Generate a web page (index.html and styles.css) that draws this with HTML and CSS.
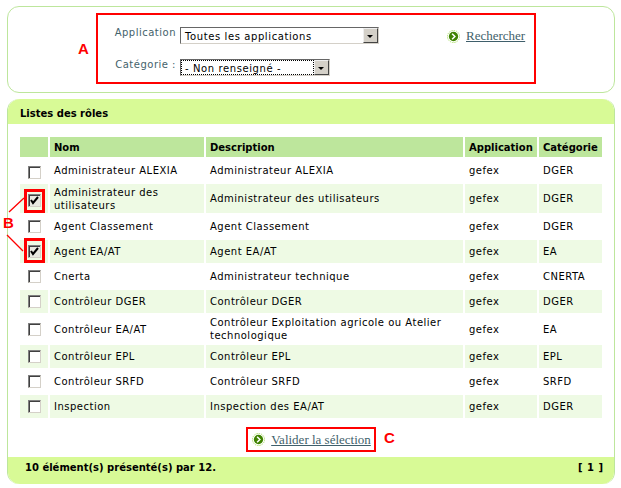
FILE: index.html
```html
<!DOCTYPE html>
<html lang="fr">
<head>
    <meta charset="UTF-8">
    <title>Listes des rôles</title>
    <link rel="stylesheet" href="styles.css">
</head>
<body>
    <svg class="defs" width="0" height="0">
        <symbol id="go" viewBox="0 0 14 14">
            <circle cx="7" cy="7" r="6.5" fill="#fff" stroke="#a8dc60" stroke-dasharray="1.5 1"/>
            <circle cx="7" cy="7" r="5" fill="#3f8300"/>
            <path d="M5.5 4l3 3-3 3" fill="none" stroke="#fff" stroke-width="1.6"/>
        </symbol>
        <symbol id="tick" viewBox="0 0 11 11">
            <path d="M2 5l2 3 5-6" fill="none" stroke="#000" stroke-width="2"/>
        </symbol>
    </svg>

    <div class="search-panel">
        <span class="mark-letter letter-a">A</span>
        <form class="search-box">
            <div class="search-fields">
                <label class="field-label">Application</label>
                <div class="select select-long">
                    <span class="select-text">Toutes les applications</span>
                    <span class="select-btn"></span>
                </div>
                <label class="field-label">Catégorie :</label>
                <div class="select select-short">
                    <span class="select-text focused">- Non renseigné -</span>
                    <span class="select-btn"></span>
                </div>
            </div>
            <a class="action search-link" href="#"><svg class="go"><use href="#go"/></svg><span>Rechercher</span></a>
        </form>
    </div>

    <div class="list-panel">
        <div class="panel-title">Listes des rôles</div>
        <table class="roles">
            <thead>
                <tr>
                    <th class="col-check"></th>
                    <th class="col-name">Nom</th>
                    <th class="col-desc">Description</th>
                    <th class="col-app">Application</th>
                    <th class="col-cat">Catégorie</th>
                </tr>
            </thead>
            <tbody>
                <tr class="h23 low"><td class="check"><span class="cb"></span></td><td>Administrateur ALEXIA</td><td>Administrateur ALEXIA</td><td>gefex</td><td>DGER</td></tr>
                <tr class="alt h29 low"><td class="check"><span class="cb on"><svg><use href="#tick"/></svg></span></td><td>Administrateur des utilisateurs</td><td>Administrateur des utilisateurs</td><td>gefex</td><td>DGER</td></tr>
                <tr class="h23"><td class="check"><span class="cb"></span></td><td>Agent Classement</td><td>Agent Classement</td><td>gefex</td><td>DGER</td></tr>
                <tr class="alt h23"><td class="check"><span class="cb on"><svg><use href="#tick"/></svg></span></td><td>Agent EA/AT</td><td>Agent EA/AT</td><td>gefex</td><td>EA</td></tr>
                <tr class="h23"><td class="check"><span class="cb"></span></td><td>Cnerta</td><td>Administrateur technique</td><td>gefex</td><td>CNERTA</td></tr>
                <tr class="alt h23"><td class="check"><span class="cb"></span></td><td>Contrôleur DGER</td><td>Contrôleur DGER</td><td>gefex</td><td>DGER</td></tr>
                <tr class="h28"><td class="check"><span class="cb"></span></td><td>Contrôleur EA/AT</td><td>Contrôleur Exploitation agricole ou Atelier technologique</td><td>gefex</td><td>EA</td></tr>
                <tr class="alt h23"><td class="check"><span class="cb"></span></td><td>Contrôleur EPL</td><td>Contrôleur EPL</td><td>gefex</td><td>EPL</td></tr>
                <tr class="h23"><td class="check"><span class="cb"></span></td><td>Contrôleur SRFD</td><td>Contrôleur SRFD</td><td>gefex</td><td>SRFD</td></tr>
                <tr class="alt h23"><td class="check"><span class="cb"></span></td><td>Inspection</td><td>Inspection des EA/AT</td><td>gefex</td><td>DGER</td></tr>
            </tbody>
        </table>
        <div class="validate-row">
            <a class="action validate-box" href="#"><svg class="go"><use href="#go"/></svg><span>Valider la sélection</span></a>
            <span class="mark-letter letter-c">C</span>
        </div>
        <div class="panel-foot">
            <span>10 élément(s) présenté(s) par 12.</span>
            <span class="pager">[ 1 ]</span>
        </div>
    </div>

    <!-- annotations B, over the table -->
    <div class="mark-box box-b1"></div>
    <div class="mark-box box-b2"></div>
    <span class="mark-letter letter-b">B</span>
    <svg class="mark-lines" width="30" height="60" viewBox="0 0 30 60">
        <path d="M4 18L19 4M2 41L18 57" fill="none" stroke="#f00" stroke-width="1.3"/>
    </svg>
</body>
</html>
```
FILE: styles.css
```css
body {
    margin: 0;
    padding: 6px 6px 0 7px;
    font-family: "DejaVu Sans", Verdana, sans-serif;
    font-size: 10px;
    color: #000;
    background: #fff;
}
.defs {
    position: absolute;
}
a {
    color: #3f5f6b;
}

/* search panel */
.search-panel {
    display: flex;
    align-items: flex-start;
    height: 79px;
    border: 1px solid #bde69c;
    border-radius: 12px;
    padding-top: 6px;
}
.mark-letter {
    color: #f00;
    font-family: "Liberation Sans", Arial, sans-serif;
    font-weight: bold;
    font-size: 15px;
    line-height: 16px;
}
.letter-a {
    width: 12px;
    margin: 28px 6px 0 70px;
}
.search-box {
    display: flex;
    width: 436px;
    height: 67px;
    border: 2px solid #f00;
}
.search-fields {
    display: grid;
    grid-template-columns: 78px auto;
    grid-template-rows: 17px 17px;
    column-gap: 4px;
    row-gap: 15px;
    align-content: start;
    justify-items: start;
    padding-top: 12px;
    width: 349px;
}
.field-label {
    justify-self: end;
    color: #44626b;
    line-height: 12px;
    letter-spacing: 0.5px;
    white-space: nowrap;
}
.select {
    display: flex;
    box-sizing: border-box;
    height: 17px;
    border: 1px solid;
    border-color: #666 #d4d0c8 #d4d0c8 #666;
    background: #fff;
    line-height: 17px;
    letter-spacing: 0.6px;
}
.select-long {
    width: 199px;
}
.select-short {
    width: 150px;
}
.select-text {
    flex: 1;
    padding-left: 4px;
    white-space: nowrap;
}
.select-text.focused {
    outline: 1px dotted #000;
    outline-offset: -1px;
}
.select-btn {
    position: relative;
    width: 15px;
    background: #d4d0c8;
    border: 1px solid;
    border-color: #eee #444 #444 #eee;
    box-sizing: border-box;
}
.select-btn::after {
    content: "";
    position: absolute;
    left: 3px;
    top: 6px;
    border: 3px solid transparent;
    border-top: 3px solid #000;
    border-bottom: 0;
}
.action {
    display: inline-flex;
    align-items: center;
    font-family: "Liberation Serif", "Times New Roman", serif;
    font-size: 13px;
}
.go {
    width: 13px;
    height: 13px;
}
.search-link {
    align-self: flex-start;
    margin-top: 13px;
    height: 16px;
}
.search-link span {
    margin-left: 6px;
}

/* list panel */
.list-panel {
    display: flex;
    flex-direction: column;
    height: 385px;
    margin-top: 6px;
    border: 1px solid #bde69c;
    border-width: 0 1px;
    border-radius: 12px;
}
.panel-title {
    height: 25px;
    padding-left: 12px;
    line-height: 29px;
    font-weight: bold;
    background: #d8fa96;
    border-radius: 12px 12px 0 0;
}
.roles {
    width: 586px;
    margin: 11px 0 0 10px;
    border-collapse: separate;
    border-spacing: 2px;
    table-layout: fixed;
}
.roles th {
    height: 20px;
    padding: 0 4px;
    text-align: left;
    background: #bde69c;
}
.col-check { width: 20px; }
.col-name { width: 146px; }
.col-desc { width: 249px; }
.col-app { width: 64px; }
.col-cat { width: 55px; }
.roles td {
    box-sizing: border-box;
    padding: 0 4px;
    line-height: 13px;
    letter-spacing: 0.5px;
}
.roles td.check {
    padding: 0 0 0 8px;
}
.roles .low td.check {
    padding-top: 4px;
}
.alt td { background: #eefae4; }
.h23 td { height: 23px; }
.h28 td { height: 28px; }
.h29 td { height: 29px; }
.cb {
    display: block;
    box-sizing: border-box;
    width: 13px;
    height: 13px;
    border: 1px solid;
    border-color: #808080 #d4d0c8 #d4d0c8 #808080;
    box-shadow: inset 1px 1px 0 #404040;
    background: #fff;
}
.cb.on {
    background: #e8e8e0;
}
.cb svg {
    display: block;
    width: 11px;
    height: 11px;
}
.validate-row {
    position: relative;
    display: flex;
    justify-content: center;
    height: 37px;
    box-sizing: border-box;
    padding-top: 7px;
}
.validate-box {
    box-sizing: border-box;
    height: 25px;
    padding: 0 3px 0 4px;
    border: 2px solid #f00;
}
.validate-box span {
    margin-left: 6px;
}
.letter-c {
    position: absolute;
    left: 376px;
    top: 10px;
}
.panel-foot {
    display: flex;
    justify-content: space-between;
    flex: 1;
    padding: 5px 11px 0 17px;
    font-weight: bold;
    line-height: 12px;
    background: #d8fa96;
    border-radius: 0 0 12px 12px;
}
.pager {
    word-spacing: 1px;
}

/* annotations */
.mark-box {
    position: absolute;
    left: 24px;
    width: 21px;
    box-sizing: border-box;
    border: 3px solid #f00;
}
.box-b1 {
    top: 189px;
    height: 24px;
}
.box-b2 {
    top: 238px;
    height: 25px;
}
.letter-b {
    position: absolute;
    left: 3px;
    top: 215px;
}
.mark-lines {
    position: absolute;
    left: 5px;
    top: 194px;
}
```
